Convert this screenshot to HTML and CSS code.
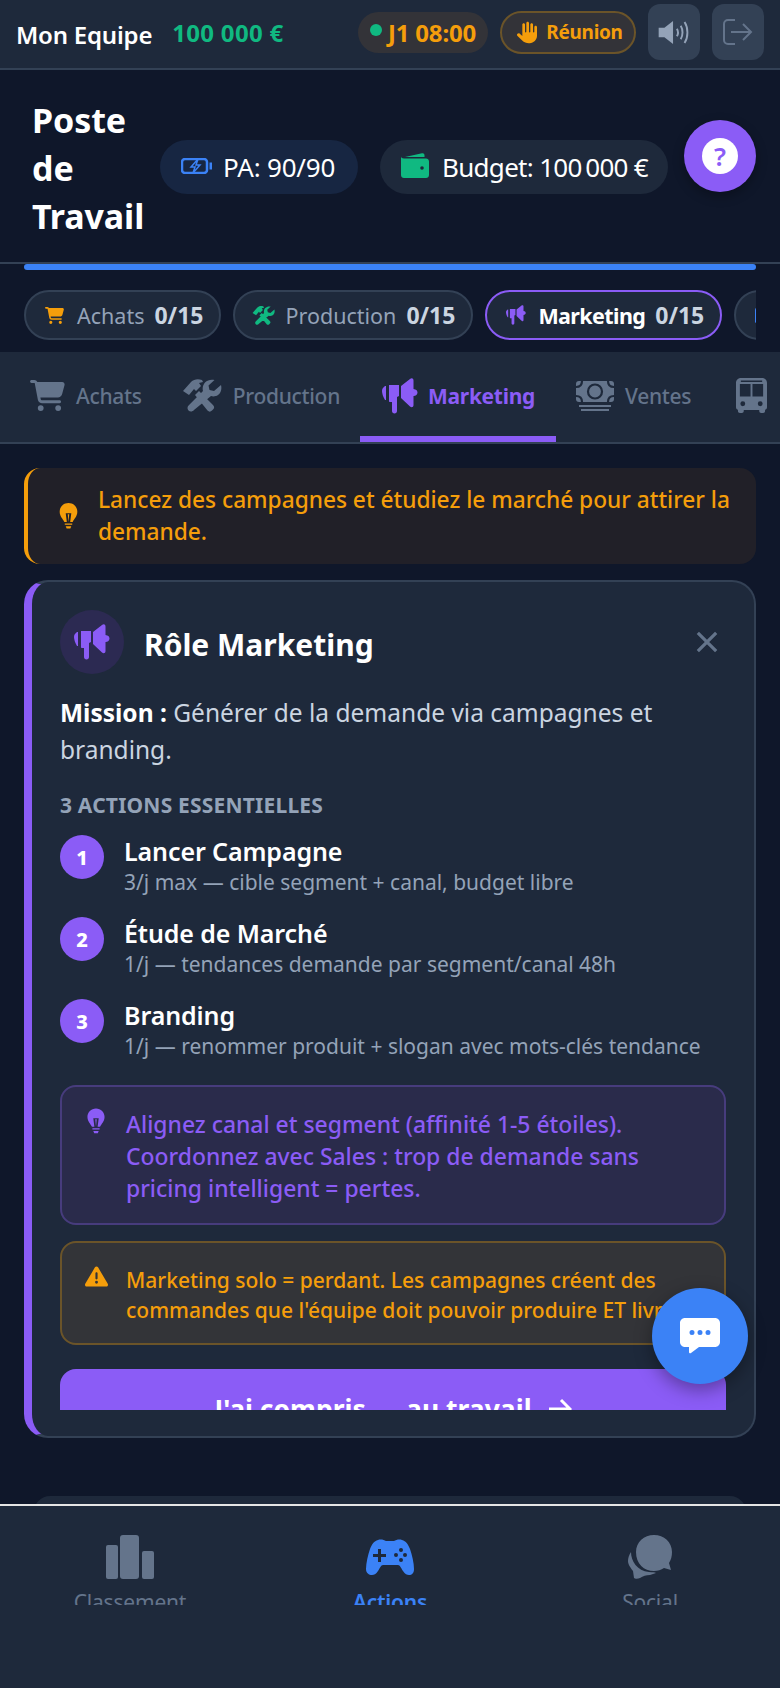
FILE: index.html
```html
<!DOCTYPE html>
<html lang="fr">
<head>
    <meta charset="UTF-8">
    <meta name="viewport" content="width=device-width, initial-scale=1.0">
    <title>Poste de Travail</title>
    <link rel="stylesheet" href="styles.css">
</head>
<body>
    <svg class="sprites" aria-hidden="true">
        <symbol id="i-cart" viewBox="0 0 576 512"><path d="M0 24C0 10.7 10.7 0 24 0H69.5c22 0 41.5 12.8 50.6 32h411c26.3 0 45.5 25 38.6 50.4l-41 152.3c-8.5 31.4-37 53.3-69.5 53.3H170.7l5.4 28.5c2.2 11.3 12.1 19.5 23.6 19.5H488c13.3 0 24 10.7 24 24s-10.7 24-24 24H199.7c-34.6 0-64.3-24.6-70.7-58.5L77.4 54.5c-.7-3.8-4-6.5-7.9-6.5H24C10.7 48 0 37.3 0 24zM128 464a48 48 0 1 1 96 0 48 48 0 1 1 -96 0zm336-48a48 48 0 1 1 0 96 48 48 0 1 1 0-96z"/></symbol>
        <symbol id="i-tools" viewBox="0 0 40 33"><path d="M1 12 9 3C12 0 16-.5 20 1l1 2-4 1 2 3-5 5-2-2-5 6zM13 16l4-4 14 14c1.500 1.500 1.500 3 0 4.500l-1 1c-1.500 1.500-3 1.500-4.500 0zM39 6c1 4 0 8-3 10-2 1.500-5 1.800-7 1L12 31c-1.500 1.800-4 2-5.500.5s-1.300-3.800.3-5.200L21 12c-.8-2.500-.2-6 2-8.500C25.500 1 29 .2 32.500 1l-6 5.500 1 4.500 4.500 1z"/></symbol>
        <symbol id="i-horn" viewBox="0 0 36 36"><path d="M3 8h1v14H3C1 19 0 15 0 13c0-2 1-3.500 3-5zM7 7h10v11l-2 1v14c0 1.500-1 2.500-2.500 2.500S10 34.500 10 33V24H8c-.6 0-1-.4-1-1zM19 8l9-7c1.500-1.300 3.500-.8 3.500 1.500V11c2.500.3 4 1.500 4 3.500s-1.500 3.300-4 3.500v9c0 2.300-2 2.800-3.500 1.500L19 20z"/></symbol>
        <symbol id="i-bulb" viewBox="0 0 20 28"><path d="M10 0c5.500 0 9.500 4 9.500 9.500 0 5-3.500 7.500-5 11h-2.700L13 11H7l1.200 9.500H5.500c-1.500-3.500-5-6-5-11C.5 4 4.500 0 10 0zM9.200 12h1.600l-.8 8.500zM6 22h8v1.500H6zM7 25h6l-1 2.500H8z"/></symbol>
    </svg>

    <div class="topbar">
        <span class="team">Mon Equipe</span>
        <span class="cash">100 000 €</span>
        <span class="clock"><span class="dot"></span>J1 08:00</span>
        <span class="meeting">
            <svg class="hand" viewBox="0 0 480 512"><path d="M288 32c0-17.700-14.300-32-32-32s-32 14.300-32 32V240c0 8.800-7.200 16-16 16s-16-7.200-16-16V64c0-17.700-14.300-32-32-32s-32 14.300-32 32V336c0 1.500 0 3.100 .1 4.600L67.600 283c-16-15.200-41.300-14.600-56.600 1.400s-14.600 41.300 1.400 56.600L124.800 448c43.100 41.100 100.400 64 160 64H304c97.200 0 176-78.800 176-176V128c0-17.700-14.300-32-32-32s-32 14.300-32 32V240c0 8.800-7.200 16-16 16s-16-7.200-16-16V64c0-17.700-14.300-32-32-32s-32 14.300-32 32V240c0 8.800-7.200 16-16 16s-16-7.200-16-16V32z"/></svg>
            Réunion
        </span>
        <button class="square-btn">
            <svg class="sound" viewBox="0 0 32 24"><path class="sound-body" d="M0 7h6l9-7v24l-9-7H0z"/><path class="sound-wave" d="M19 8c1.500 2.500 1.500 5.500 0 8M23 5c2.500 4 2.500 10 0 14M27 1c4 6 4 16 0 22"/></svg>
        </button>
        <button class="square-btn">
            <svg class="logout" viewBox="0 0 30 26"><path d="M12 1H5C2.800 1 1 2.800 1 5v16c0 2.200 1.800 4 4 4h7M8 13h20M20 5l8 8-8 8"/></svg>
        </button>
    </div>

    <div class="page-head">
        <h1>Poste de Travail</h1>
        <div class="stat stat-pa">
            <svg class="battery" viewBox="0 0 31 16"><rect x="1" y="1" width="25" height="14" rx="3"/><path class="batt-tip" d="M28.500 4.500H31v7h-2.500z"/><path class="batt-bolt" d="M17 1 10 9h4l-2 6 7-8h-4z"/></svg>
            PA: 90/90
        </div>
        <div class="stat stat-budget">
            <svg class="wallet" viewBox="0 0 28 25"><path d="M4 4 21 .3c1.500-.3 2.500.5 2.500 2V4zM3 5.500h22c1.700 0 3 1.300 3 3V22c0 1.700-1.300 3-3 3H3c-1.700 0-3-1.300-3-3V3.500c0 1 1.300 2 3 2z"/><circle class="wallet-dot" cx="21" cy="15" r="1.800"/></svg>
            Budget: 100&#8239;000 €
        </div>
        <button class="help-btn"><span>?</span></button>
    </div>

    <div class="progress"></div>

    <div class="chips">
        <div class="chip"><svg class="chip-cart amber"><use href="#i-cart"/></svg>Achats <b>0/15</b></div>
        <div class="chip"><svg class="chip-tools green"><use href="#i-tools"/></svg>Production <b>0/15</b></div>
        <div class="chip chip-active"><svg class="chip-horn purple"><use href="#i-horn"/></svg><strong>Marketing</strong> <b>0/15</b></div>
        <div class="chip"><svg class="chip-cart blue" viewBox="0 0 20 16"><rect width="20" height="16" rx="2"/></svg>Ventes <b>0/15</b></div>
    </div>

    <div class="tabs">
        <div class="tab"><svg class="tab-icon"><use href="#i-cart"/></svg>Achats</div>
        <div class="tab"><svg class="tab-icon tab-tools"><use href="#i-tools"/></svg>Production</div>
        <div class="tab tab-active"><svg class="tab-icon tab-horn"><use href="#i-horn"/></svg>Marketing</div>
        <div class="tab">
            <svg class="tab-icon tab-money" viewBox="0 0 38 30">
                <rect width="38" height="21" rx="3"/>
                <circle class="money-cut" cx="19" cy="10.500" r="7"/>
                <path class="money-cut" d="M0 6c4 0 6-2 6-6M32 0c0 4 2 6 6 6M0 15c4 0 6 2 6 6M32 21c0-4 2-6 6-6"/>
                <path d="M3 24h32v2H3zM5 28h28v2H5z"/>
            </svg>
            Ventes
        </div>
        <div class="tab">
            <svg class="tab-icon tab-bus" viewBox="0 0 32 36">
                <path fill-rule="evenodd" d="M5 0h22c2.800 0 5 2.200 5 5v25c0 1.500-1 2.500-2 2.800V34c0 1.200-.8 2-2 2h-2c-1.200 0-2-.8-2-2v-1H8v1c0 1.200-.8 2-2 2H4c-1.200 0-2-.8-2-2v-1.200C1 32.500 0 31.500 0 30V5c0-2.800 2.200-5 5-5zM4 6v13h11V6zM17 6v13h11V6zM5 2.500V4h22V2.500zM7 24a2.500 2.500 0 1 0 0 5 2.500 2.500 0 0 0 0-5zM25 24a2.500 2.500 0 1 0 0 5 2.500 2.500 0 0 0 0-5z"/>
            </svg>
        </div>
    </div>

    <div class="main">
        <div class="hint">
            <svg class="hint-icon amber"><use href="#i-bulb"/></svg>
            <span>Lancez des campagnes et étudiez le marché pour attirer la demande.</span>
        </div>

        <div class="role-card">
            <div class="role-body">
                <div class="role-head">
                    <span class="role-badge"><svg class="purple"><use href="#i-horn"/></svg></span>
                    <h2>Rôle Marketing</h2>
                    <svg class="close" viewBox="0 0 24 24"><path d="M2 2l20 20M22 2 2 22"/></svg>
                </div>
                <p class="mission"><strong>Mission :</strong> Générer de la demande via campagnes et branding.</p>
                <div class="section-label">3 ACTIONS ESSENTIELLES</div>

                <div class="step">
                    <span class="step-num">1</span>
                    <div><div class="step-title">Lancer Campagne</div><div class="step-sub">3/j max — cible segment + canal, budget libre</div></div>
                </div>
                <div class="step">
                    <span class="step-num">2</span>
                    <div><div class="step-title">Étude de Marché</div><div class="step-sub">1/j — tendances demande par segment/canal 48h</div></div>
                </div>
                <div class="step">
                    <span class="step-num">3</span>
                    <div><div class="step-title">Branding</div><div class="step-sub">1/j — renommer produit + slogan avec mots-clés tendance</div></div>
                </div>

                <div class="note note-tip">
                    <svg class="note-icon purple"><use href="#i-bulb"/></svg>
                    <span>Alignez canal et segment (affinité 1-5 étoiles). Coordonnez avec Sales : trop de demande sans pricing intelligent = pertes.</span>
                </div>
                <div class="note note-warn">
                    <svg class="warn-icon amber" viewBox="0 0 512 512"><path d="M256 32c14.200 0 27.300 7.500 34.500 19.800l216 368c7.300 12.400 7.300 27.700 .2 40.100S486.300 480 472 480H40c-14.300 0-27.600-7.700-34.700-20.100s-7-27.800 .2-40.100l216-368C228.700 39.500 241.800 32 256 32zm0 128c-13.300 0-24 10.700-24 24V296c0 13.300 10.700 24 24 24s24-10.700 24-24V184c0-13.300-10.700-24-24-24zm32 224a32 32 0 1 0 -64 0 32 32 0 1 0 64 0z"/></svg>
                    <span>Marketing solo = perdant. Les campagnes créent des commandes que l'équipe doit pouvoir produire ET livrer.</span>
                </div>
                <button class="go-btn">J'ai compris — au travail
                    <svg class="go-arrow" viewBox="0 0 24 22"><path d="M1 11h21M13 2l9 9-9 9"/></svg>
                </button>
            </div>
        </div>

        <div class="next-card"></div>
    </div>

    <button class="fab">
        <svg viewBox="0 0 40 36"><path fill-rule="evenodd" d="M5 0h30c2.800 0 5 2.200 5 5v19c0 2.800-2.200 5-5 5H19l-8 6c-1 .6-2 0-2-1v-5H5c-2.800 0-5-2.200-5-5V5c0-2.800 2.200-5 5-5zM12 12a2.500 2.500 0 1 0 0 5 2.500 2.500 0 0 0 0-5zM20 12a2.500 2.500 0 1 0 0 5 2.500 2.500 0 0 0 0-5zM28 12a2.500 2.500 0 1 0 0 5 2.500 2.500 0 0 0 0-5z"/></svg>
    </button>

    <div class="bottom-nav">
        <div class="nav-item">
            <svg class="nav-icon" viewBox="0 0 48 44"><rect x="0" y="10" width="12" height="34" rx="2"/><rect x="14" y="0" width="19" height="44" rx="3"/><rect x="36" y="16" width="12" height="28" rx="2"/></svg>
            Classement
        </div>
        <div class="nav-item nav-active">
            <svg class="nav-icon" viewBox="0 0 48 36"><path fill-rule="evenodd" d="M12 1c3-1 6 0 8 1h8c2-1 5-2 8-1 4 1 6 4 8 9 2 6 4 14 4 20 0 4-2 6-5 6-2 0-4-1-6-4-2-3-3-6-5-6H17c-2 0-3 3-5 6-2 3-4 4-6 4-3 0-6-2-6-6 0-6 2-14 4-20 2-5 4-8 8-9zM12 10v5H7v3h5v5h3v-5h5v-3h-5v-5zM35 9a2 2 0 1 0 0 4 2 2 0 0 0 0-4zM30 14a2 2 0 1 0 0 4 2 2 0 0 0 0-4zM39 14a2 2 0 1 0 0 4 2 2 0 0 0 0-4zM35 19a2 2 0 1 0 0 4 2 2 0 0 0 0-4z"/></svg>
            Actions
        </div>
        <div class="nav-item">
            <svg class="nav-icon" viewBox="0 0 44 44"><path d="M26 0c10 0 18 7 18 17 0 4-1 8-3 11l2 7-7-2c-3 2-6 3-10 3-10 0-18-7-18-19C8 7 16 0 26 0z"/><path d="M3 17c0 9 6 19 18 20 3 .3 6 0 7 1l-6 2c-4 0-7 1-10 3-2 1-5 1-6 0l-1-7C1 31 0 28 0 26c0-3 1-6 3-9z"/></svg>
            Social
        </div>
    </div>
</body>
</html>
```

FILE: styles.css
```css
* {
    box-sizing: border-box;
}
body {
    font-family: 'Noto Sans', 'Open Sans', sans-serif;
    margin: 0;
    height: 1688px;
    overflow: hidden;
    display: flex;
    flex-direction: column;
    position: relative;
    background-color: #0f172a;
    color: #fff;
}
button {
    font-family: inherit;
    border: none;
    cursor: pointer;
}
svg {
    fill: currentColor;
    flex-shrink: 0;
}
.sprites {
    display: none;
}
.amber { color: #f59e0b; }
.green { color: #10b981; }
.purple { color: #8b5cf6; }
.blue { color: #3b82f6; }

/* top bar */
.topbar {
    height: 70px;
    flex-shrink: 0;
    display: flex;
    align-items: center;
    padding: 0 16px 4px;
    background-color: #1e293b;
    border-bottom: 2px solid #334155;
}
.team {
    margin-top: 4px;
    font-size: 24px;
    font-weight: 600;
    letter-spacing: -0.2px;
}
.cash {
    margin-left: 20px;
    font-size: 24px;
    font-weight: 700;
    color: #10b981;
    letter-spacing: 0.3px;
}
.clock {
    margin-left: auto;
    height: 41px;
    width: 130px;
    display: flex;
    align-items: center;
    justify-content: center;
    gap: 6px;
    border-radius: 21px;
    background-color: #333338;
    color: #f59e0b;
    font-size: 24px;
    font-weight: 700;
    letter-spacing: -0.2px;
}
.dot {
    width: 12px;
    height: 12px;
    margin-top: -4px;
    border-radius: 50%;
    background-color: #10b981;
}
.meeting {
    margin-left: 12px;
    height: 43px;
    width: 136px;
    padding-left: 4px;
    display: flex;
    align-items: center;
    justify-content: center;
    gap: 9px;
    border: 2px solid #6b5429;
    border-radius: 22px;
    background-color: #333338;
    color: #f59e0b;
    font-size: 19px;
    font-weight: 700;
    letter-spacing: -0.3px;
}
.hand {
    width: 20px;
    height: 23px;
}
.square-btn {
    margin-left: 12px;
    width: 52px;
    height: 56px;
    padding: 0;
    border-radius: 12px;
    background-color: #334155;
    display: flex;
    align-items: center;
    justify-content: center;
}
.sound {
    width: 32px;
    height: 23px;
}
.sound-body {
    fill: #94a3b8;
}
.sound-wave {
    fill: none;
    stroke: #94a3b8;
    stroke-width: 2;
}
.logout {
    width: 30px;
    height: 26px;
    fill: none;
    stroke: #64748b;
    stroke-width: 2;
}

/* page head */
.page-head {
    height: 194px;
    flex-shrink: 0;
    display: flex;
    align-items: center;
    padding: 0 24px 0 32px;
    border-bottom: 2px solid #334155;
}
.page-head h1 {
    margin: 4px 0 0;
    width: 128px;
    flex-shrink: 0;
    font-size: 34px;
    line-height: 48px;
    font-weight: 700;
    letter-spacing: -0.1px;
}
.stat {
    height: 54px;
    margin-top: 2px;
    display: flex;
    align-items: center;
    border-radius: 27px;
    font-size: 26px;
    white-space: nowrap;
}
.stat-pa {
    width: 198px;
    padding-left: 21px;
    gap: 11px;
    background-color: #172642;
    letter-spacing: -0.2px;
}
.stat-budget {
    width: 288px;
    margin-left: 22px;
    padding-left: 21px;
    gap: 13px;
    background-color: #1e293b;
    letter-spacing: -0.7px;
}
.battery {
    width: 31px;
    height: 16px;
    margin-top: -3px;
    fill: none;
    stroke: #3b82f6;
    stroke-width: 2.500;
}
.batt-tip {
    fill: #3b82f6;
    stroke: none;
}
.batt-bolt {
    fill: #172642;
    stroke: #3b82f6;
    stroke-width: 1.500;
}
.wallet {
    width: 28px;
    height: 25px;
    margin-top: -3px;
    color: #10b981;
}
.wallet-dot {
    fill: #1e293b;
}
.help-btn {
    margin-left: auto;
    margin-top: -20px;
    width: 72px;
    height: 72px;
    padding: 0;
    border-radius: 50%;
    background-color: #8b5cf6;
    box-shadow: 0 4px 12px rgba(0,0,0,0.3);
    display: flex;
    align-items: center;
    justify-content: center;
}
.help-btn span {
    width: 36px;
    height: 36px;
    border-radius: 50%;
    background-color: #fff;
    color: #8b5cf6;
    font-size: 26px;
    font-weight: 600;
    line-height: 36px;
}

.progress {
    height: 6px;
    flex-shrink: 0;
    margin: 0 24px;
    border-radius: 3px;
    background-color: #3b82f6;
}

/* chips */
.chips {
    display: flex;
    flex-shrink: 0;
    gap: 12px;
    margin: 20px 24px 12px;
    overflow: hidden;
}
.chip {
    height: 50px;
    padding: 0 16px 0 19px;
    display: flex;
    flex-shrink: 0;
    align-items: center;
    gap: 10px;
    border: 2px solid #334155;
    border-radius: 25px;
    background-color: #1e293b;
    color: #94a3b8;
    font-size: 21.500px;
    white-space: nowrap;
}
.chip b {
    color: #cbd5e1;
    font-size: 23px;
    font-weight: 700;
}
.chip strong {
    color: #fff;
    font-weight: 700;
    letter-spacing: -0.6px;
}
.chip-active {
    border-color: #8b5cf6;
}
.chip-cart {
    width: 19px;
    height: 17px;
    margin-right: 3px;
}
.chip-tools {
    width: 23px;
    height: 19px;
    margin-left: -2px;
}
.chip-horn {
    width: 20px;
    height: 20px;
    margin-right: 2px;
}

/* tabs */
.tabs {
    height: 92px;
    flex-shrink: 0;
    display: flex;
    padding-left: 10px;
    overflow: hidden;
    background-color: #1e293b;
    border-bottom: 2px solid #334155;
}
.tab {
    height: 90px;
    flex-shrink: 0;
    padding: 0 20px 3px;
    display: flex;
    align-items: center;
    gap: 11px;
    color: #64748b;
    font-size: 21px;
    font-weight: 500;
    letter-spacing: -0.3px;
}
.tab-active {
    color: #8b5cf6;
    font-weight: 700;
    border-bottom: 6px solid #8b5cf6;
    padding: 3px 21px 0 20px;
    gap: 10px;
}
.tab-icon {
    width: 35px;
    height: 31px;
}
.tab-tools {
    width: 40px;
    height: 33px;
}
.tab-horn {
    width: 36px;
    height: 36px;
    margin-left: 2px;
}
.tab-money {
    width: 38px;
    height: 30px;
}
.money-cut {
    fill: none;
    stroke: #1e293b;
    stroke-width: 2.200;
}
.tab-bus {
    width: 31px;
    height: 35px;
    margin-left: 5px;
}

/* content */
.main {
    flex: 1;
    min-height: 0;
    overflow: hidden;
    padding: 24px 24px 0;
}
.hint {
    height: 96px;
    display: flex;
    align-items: center;
    gap: 20px;
    padding: 0 20px 0 31px;
    border-left: 4px solid #f59e0b;
    border-radius: 16px;
    background-color: #212028;
    color: #f59e0b;
    font-size: 22.700px;
    font-weight: 500;
    line-height: 32px;
}
.hint-icon {
    width: 19px;
    height: 26px;
}
.role-card {
    height: 858px;
    margin-top: 16px;
    padding: 28px 28px 26px;
    display: flex;
    border: 2px solid #334155;
    border-left: 8px solid #8b5cf6;
    border-radius: 24px;
    background-color: #1e293b;
}
.role-body {
    flex: 1;
    min-width: 0;
    overflow: hidden;
}
.role-head {
    display: flex;
    align-items: center;
    gap: 20px;
    height: 64px;
}
.role-badge {
    width: 64px;
    height: 64px;
    border-radius: 50%;
    background-color: #2c2a52;
    display: flex;
    align-items: center;
    justify-content: center;
}
.role-badge svg {
    width: 36px;
    height: 36px;
}
.role-head h2 {
    margin: 4px 0 0;
    font-size: 30px;
    font-weight: 700;
}
.close {
    margin-left: auto;
    margin-right: 8px;
    width: 22px;
    height: 22px;
    fill: none;
    stroke: #64748b;
    stroke-width: 3.500;
}
.mission {
    margin: 20px 0 0;
    font-size: 24.500px;
    line-height: 37px;
    color: #cbd5e1;
}
.mission strong {
    color: #fff;
}
.section-label {
    margin-top: 23px;
    font-size: 21px;
    line-height: 28px;
    font-weight: 700;
    color: #94a3b8;
    letter-spacing: 0.2px;
}
.step {
    display: flex;
    gap: 20px;
    margin-top: 18px;
    height: 64px;
}
.section-label + .step {
    margin-top: 16px;
}
.step-num {
    width: 44px;
    height: 44px;
    flex-shrink: 0;
    border-radius: 50%;
    background-color: #8b5cf6;
    display: flex;
    align-items: center;
    justify-content: center;
    font-size: 20px;
    font-weight: 800;
}
.step-title {
    font-size: 25px;
    font-weight: 600;
    line-height: 32px;
    letter-spacing: -0.1px;
}
.step-sub {
    margin-top: 1px;
    font-size: 21px;
    line-height: 28px;
    color: #94a3b8;
    white-space: nowrap;
}
.note {
    display: flex;
    border: 2px solid;
    border-radius: 16px;
}
.note-tip {
    margin-top: 22px;
    height: 140px;
    padding: 22px 22px 0 25px;
    gap: 21px;
    background-color: #2a2b4b;
    border-color: #473c7d;
    color: #8b5cf6;
    font-size: 22.900px;
    font-weight: 500;
    line-height: 32px;
}
.note-icon {
    width: 18px;
    height: 26px;
    margin-top: -1px;
}
.note-warn {
    margin-top: 16px;
    height: 104px;
    padding: 22px 22px 0 23px;
    gap: 18px;
    background-color: #333438;
    border-color: #6b5429;
    color: #f59e0b;
    font-size: 21px;
    font-weight: 500;
    line-height: 30px;
}
.warn-icon {
    width: 23px;
    height: 23px;
}
.go-btn {
    margin-top: 24px;
    width: 100%;
    height: 80px;
    display: flex;
    align-items: center;
    justify-content: center;
    gap: 16px;
    border-radius: 16px;
    background-color: #8b5cf6;
    color: #fff;
    font-size: 26.500px;
    font-weight: 700;
}
.go-arrow {
    width: 24px;
    height: 22px;
    fill: none;
    stroke: #fff;
    stroke-width: 3;
}
.next-card {
    height: 120px;
    margin: 58px 10px 0;
    border-radius: 16px;
    background-color: #1e293b;
}

/* floating chat button */
.fab {
    position: absolute;
    left: 652px;
    top: 1288px;
    width: 96px;
    height: 96px;
    padding: 0;
    border-radius: 50%;
    background-color: #3b82f6;
    box-shadow: 0 6px 18px rgba(0,0,0,0.35);
    color: #fff;
    display: flex;
    align-items: center;
    justify-content: center;
}
.fab svg {
    width: 40px;
    height: 36px;
}

/* bottom nav */
.bottom-nav {
    height: 184px;
    flex-shrink: 0;
    display: grid;
    grid-template-columns: repeat(3, 1fr);
    align-items: start;
    border-top: 2px solid #e5e5e5;
    background-color: #1e293b;
}
.nav-item {
    height: 99px;
    padding-top: 29px;
    overflow: hidden;
    display: flex;
    flex-direction: column;
    align-items: center;
    gap: 10px;
    color: #64748b;
    font-size: 21px;
    line-height: 26px;
    letter-spacing: -0.2px;
}
.nav-active {
    color: #3b82f6;
    font-weight: 600;
}
.nav-icon {
    width: 48px;
    height: 44px;
}
```
